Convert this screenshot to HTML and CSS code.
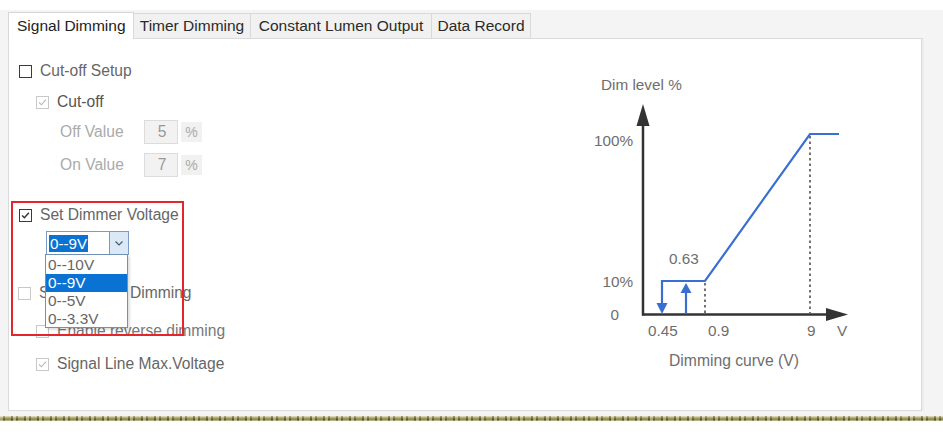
FILE: index.html
```html
<!DOCTYPE html>
<html>
<head>
<meta charset="utf-8">
<link rel="stylesheet" href="styles.css">
</head>
<body>
<div class="app">
  <div class="tabs">
    <div class="tab active w1">Signal Dimming</div>
    <div class="tab w2">Timer Dimming</div>
    <div class="tab w3">Constant Lumen Output</div>
    <div class="tab w4">Data Record</div>
  </div>
  <div class="panel">
    <div class="form">
      <div class="row r1"><span class="cb"></span><span class="lbl c1">Cut-off Setup</span></div>
      <div class="row r2 sub"><span class="cb dis checked"><svg viewBox="0 0 13 13"><path d="M2.5 6.5 L5.2 9.2 L10.5 3.2" /></svg></span><span class="lbl c2">Cut-off</span></div>
      <div class="row r3 val"><span class="vlbl">Off Value</span><span class="inp">5</span><span class="pct">%</span></div>
      <div class="row r4 val"><span class="vlbl">On Value</span><span class="inp">7</span><span class="pct">%</span></div>
      <div class="row r5"><span class="cb checked"><svg viewBox="0 0 13 13"><path d="M2.5 6.5 L5.2 9.2 L10.5 3.2" /></svg></span><span class="lbl c1">Set Dimmer Voltage</span></div>
      <div class="row r6 selrow">
        <div class="select"><span class="selval">0--9V</span><span class="selbtn"><svg viewBox="0 0 18 22"><path d="M5.5 9.5 L9 13 L12.5 9.5" /></svg></span></div>
      </div>
      <div class="row r7 main2"><span class="cb dis"></span><span class="lbl c1">Signal Mode Dimming</span></div>
      <div class="row r8 sub"><span class="cb dis"></span><span class="lbl c3">Enable reverse dimming</span></div>
      <div class="row r9 sub"><span class="cb dis checked"><svg viewBox="0 0 13 13"><path d="M2.5 6.5 L5.2 9.2 L10.5 3.2" /></svg></span><span class="lbl c1">Signal Line Max.Voltage</span></div>
    </div>
    <svg class="chart" width="300" height="320" viewBox="580 60 300 320">
      <g class="lab">
        <text x="601" y="89.5">Dim level %</text>
        <text x="633" y="145.5" text-anchor="end">100%</text>
        <text x="633" y="286.5" text-anchor="end">10%</text>
        <text x="619" y="320" text-anchor="end">0</text>
        <text x="669" y="263.5">0.63</text>
        <text x="648" y="336">0.45</text>
        <text x="708" y="336">0.9</text>
        <text x="807" y="336">9</text>
        <text x="837" y="336">V</text>
        <text x="669" y="366" class="big">Dimming curve (V)</text>
      </g>
      <line class="dot" x1="705" y1="283" x2="705" y2="313"/>
      <line class="dot" x1="810" y1="136" x2="810" y2="313"/>
      <line class="axis" x1="643" y1="122" x2="643" y2="315.5"/>
      <polygon class="axhead" points="643,104 636.5,126 649.5,126"/>
      <line class="axis" x1="642" y1="314.5" x2="830" y2="314.5"/>
      <polygon class="axhead" points="848,314.5 826,308 826,321"/>
      <polyline class="curve" points="662,304 662,281 705,281 810,134 839,134"/>
      <polygon class="bhead" points="656.5,303 667.5,303 662,314"/>
      <line class="curve" x1="686" y1="313.5" x2="686" y2="292"/>
      <polygon class="bhead" points="680.5,293 691.5,293 686,283"/>
    </svg>
    <div class="dropdown">
      <div class="opt">0--10V</div>
      <div class="opt on">0--9V</div>
      <div class="opt">0--5V</div>
      <div class="opt">0--3.3V</div>
    </div>
    <div class="redbox"></div>
  </div>
</div>
<div class="stripe"></div>
</body>
</html>
```
FILE: styles.css
```css
* { box-sizing: border-box; }
html, body { margin: 0; padding: 0; background: #fff; }
body { font-family: "Liberation Sans", Arial, sans-serif; }

.app {
  margin-top: 10px;
  background: #f4f4f4;
  padding: 2px 21px 5px 8px;
  width: 943px;
}

.tabs {
  display: flex;
  align-items: flex-end;
  height: 26px;
  position: relative;
  z-index: 2;
}
.tab {
  height: 25px;
  border: 1px solid #d9d9d9;
  border-bottom: none;
  background: #f1f1f1;
  color: #2a2a2a;
  font-size: 15.5px;
  line-height: 23px;
  text-align: center;
  margin-left: -1px;
  white-space: nowrap;
}
.tab.active {
  height: 27px;
  margin-bottom: -1px;
  margin-left: 0;
  background: #fff;
  border-color: #d6d6d6;
  line-height: 25px;
  text-align: left;
  padding-left: 8px;
  color: #222;
}
.w1 { width: 126px; }
.w2 { width: 118px; }
.w3 { width: 182px; }
.w4 { width: 100px; }

.panel {
  position: relative;
  display: flex;
  height: 373px;
  background: #fff;
  border: 1px solid #dadada;
  box-shadow: 2px 0 0 #ececec;
}

.form {
  width: 571px;
  padding: 20px 0 0 10px;
  font-size: 15.6px;
}
.row { display: flex; align-items: center; height: 24px; }
.r2 { margin-top: 7px; }
.r3 { margin-top: 6px; }
.r4 { margin-top: 9px; }
.r5 { margin-top: 26px; }
.r6 { margin-top: 4px; }
.r7 { margin-top: 26px; }
.r8 { margin-top: 14px; }
.r9 { margin-top: 9px; }

.sub { padding-left: 17px; }
.main2 { margin-left: -1px; }
.val { padding-left: 41px; }

.cb {
  width: 13px; height: 13px;
  border: 1px solid #3a3a3a;
  background: #fff;
  margin-right: 8px;
  flex: none;
  display: flex;
}
.cb svg { width: 11px; height: 11px; }
.cb svg path { fill: none; stroke: #333; stroke-width: 1.7; }
.cb.dis { border-color: #c8c8c8; }
.cb.dis svg path { stroke: #b8b8b8; stroke-width: 1.3; }

.lbl { white-space: nowrap; }
.c1 { color: #666; }
.c2 { color: #555; }
.c3 { color: #777; }

.vlbl { width: 84px; color: #aaa; }
.inp {
  width: 34px; height: 24px;
  background: #f2f2f2;
  border: 1px solid #dcdcdc;
  color: #999;
  text-align: center;
  line-height: 21px;
  padding-left: 2px;
}
.pct {
  margin-left: 3px;
  width: 21px; height: 20px;
  background: #f1f1f1;
  color: #aaa;
  font-size: 14px;
  line-height: 20px;
  text-align: center;
}

.selrow { padding-left: 27px; }
.select {
  width: 83px; height: 24px;
  border: 1px solid #7b9bc4;
  display: flex;
  align-items: center;
  background: #fff;
}
.selval {
  margin-left: 2px;
  background: #0a72d2;
  color: #fff;
  height: 17px;
  line-height: 17px;
  padding: 0 1px;
  font-size: 15.2px;
}
.selbtn {
  margin-left: auto;
  width: 19px; height: 22px;
  background: #dbe8f6;
  border-left: 1px solid #7b9bc4;
  display: flex;
}
.selbtn svg { width: 18px; height: 22px; }
.selbtn path { fill: none; stroke: #4a5a70; stroke-width: 1.2; }

.chart { flex: none; margin-top: 21px; }
.lab text { font-family: "Liberation Sans", Arial, sans-serif; font-size: 15.3px; fill: #6e6e6e; }
.lab text.big { font-size: 15.7px; }
.axis { stroke: #333; stroke-width: 2.5; }
.axhead { fill: #333; }
.curve { fill: none; stroke: #3a6fd2; stroke-width: 2.2; }
.bhead { fill: #3a6fd2; }
.dot { stroke: #444; stroke-width: 1.5; stroke-dasharray: 2.5 3; }

.dropdown {
  position: absolute;
  left: 36px; top: 215px;
  width: 83px; height: 74px;
  background: #fff;
  border: 1px solid #7090b8;
  box-shadow: 2px 2px 2px rgba(0,0,0,0.12);
  padding-top: 1px;
  z-index: 3;
}
.opt {
  height: 18px;
  line-height: 18px;
  padding-left: 2px;
  color: #666;
  font-size: 15.4px;
}
.opt.on { background: #0a72d2; color: #fff; }

.redbox {
  position: absolute;
  left: 2px; top: 162px;
  width: 173px; height: 135px;
  border: 2px solid #e3262b;
  z-index: 4;
}

.stripe {
  height: 5px;
  width: 943px;
  background:
    repeating-linear-gradient(90deg, rgba(255,255,230,0.35) 0 3px, rgba(60,55,20,0.25) 3px 5px, rgba(255,250,200,0.2) 5px 11px, rgba(40,40,10,0.3) 11px 13px),
    linear-gradient(#e6e2bc, #8f8a55 40%, #6f6b3c 70%, #c8c49a);
}
```
